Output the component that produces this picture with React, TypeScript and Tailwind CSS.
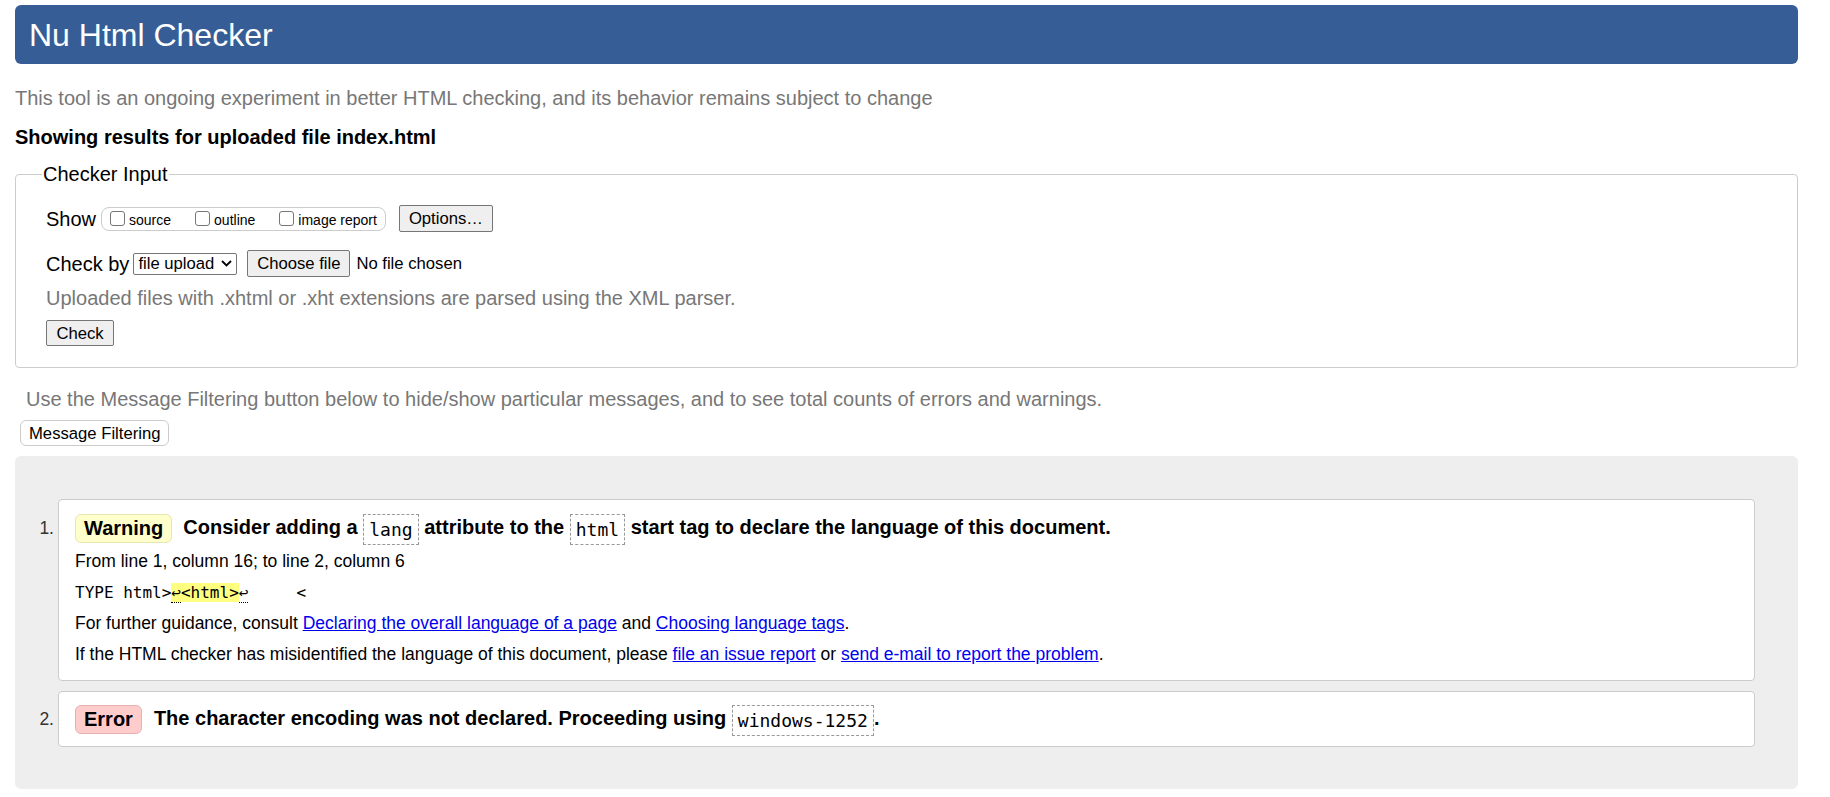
import React from "react";

function Checkbox() {
  return (
    <span className="inline-block h-[15px] w-[15px] shrink-0 rounded-[3px] border border-[#767676] bg-white" />
  );
}

function Code({ children }: { children: React.ReactNode }) {
  return (
    <code className="inline-block border border-dashed border-[#999] px-[5px] align-middle font-['DejaVu_Sans_Mono',monospace] text-[18px] font-normal leading-[29px]">
      {children}
    </code>
  );
}

function A({ children }: { children: React.ReactNode }) {
  return <a className="text-[#0000ee] underline">{children}</a>;
}

export default function App() {
  return (
    <div className="min-h-[797px] bg-white pl-[15px] pr-[32px] pt-[5px] font-['Liberation_Sans',Arial,sans-serif] text-black">
      <h1 className="flex h-[59px] items-center rounded-[6px] bg-[#365d95] pl-[14px] text-[32px] font-normal leading-none text-white">
        Nu Html Checker
      </h1>
      <p className="mt-[23px] text-[20px] leading-[23px] text-[#777]">
        This tool is an ongoing experiment in better HTML checking, and its behavior remains subject to change
      </p>
      <p className="mt-[16px] text-[20px] font-bold leading-[23px]">Showing results for uploaded file index.html</p>

      <fieldset className="mt-[14px] rounded-[4px] border border-[#ccc] pb-[21px] pl-[26px] pr-[26px] pt-[19px]">
        <legend className="px-[1px] text-[20px] leading-[23px]">Checker Input</legend>
        <div className="pl-[4px]">
          <div className="flex h-[27px] items-center">
            <span className="text-[20px]">Show</span>
            <div className="ml-[5px] flex h-[24px] items-center gap-[24px] rounded-[8px] border border-[#ccc] pl-[8px] pr-[8px] text-[14px]">
              <label className="flex items-center gap-[4px]">
                <Checkbox />
                <span className="mt-[3px]">source</span>
              </label>
              <label className="flex items-center gap-[4px]">
                <Checkbox />
                <span className="mt-[3px]">outline</span>
              </label>
              <label className="flex items-center gap-[4px]">
                <Checkbox />
                <span className="mt-[3px]">image report</span>
              </label>
            </div>
            <button className="ml-[13px] h-[27px] w-[94px] rounded-[2px] border border-[#767676] bg-[#efefef] text-[16.67px]">
              Options…
            </button>
          </div>

          <div className="mt-[18px] flex h-[27px] items-center">
            <span className="text-[20px]">Check by</span>
            <div className="ml-[4px] flex h-[22px] w-[104px] items-center justify-between rounded-[2px] border border-[#767676] bg-white pl-[4px] pr-[4px] text-[16.67px]">
              <span>file upload</span>
              <svg width="11" height="7" viewBox="0 0 11 7" fill="none">
                <path d="M1 1l4.5 4.5L10 1" stroke="#000" strokeWidth="1.8" />
              </svg>
            </div>
            <button className="ml-[10px] h-[27px] w-[103px] rounded-[2px] border border-[#767676] bg-[#efefef] text-[16.67px]">
              Choose file
            </button>
            <span className="ml-[6px] text-[16.67px]">No file chosen</span>
          </div>

          <p className="mt-[10px] text-[20px] leading-[23px] text-[#777]">
            Uploaded files with .xhtml or .xht extensions are parsed using the XML parser.
          </p>

          <button className="mt-[10px] h-[26px] w-[68px] rounded-[2px] border border-[#767676] bg-[#efefef] text-[16.67px]">
            Check
          </button>
        </div>
      </fieldset>

      <p className="mt-[20px] pl-[11px] text-[20px] leading-[23px] text-[#777]">
        Use the Message Filtering button below to hide/show particular messages, and to see total counts of errors and warnings.
      </p>
      <button className="ml-[5px] mt-[9px] h-[26px] rounded-[6px] border border-[#ccc] bg-white px-[8px] text-[16.67px]">
        Message Filtering
      </button>

      <div className="mt-[10px] rounded-[6px] bg-[#eee] pb-[42px] pr-[43px] pt-[43px]">
        <ol>
          <li className="flex items-start">
            <div className="mt-[13px] h-[32px] w-[43px] pr-[4px] text-right text-[17.5px] leading-[32px] text-[#333]">1.</div>
            <div className="flex-1 rounded-[4px] border border-[#ccc] bg-white pb-[10px] pl-[16px] pt-[12px]">
              <div className="flex h-[32px] items-center">
                <span className="rounded-[6px] border border-[#e6e6b0] bg-[#ffffcc] px-[8px] text-[20px] font-bold leading-[27px]">
                  Warning
                </span>
                <span className="ml-[11px] text-[20px] font-bold leading-[32px]">
                  Consider adding a <Code>lang</Code> attribute to the <Code>html</Code> start tag to declare the language of this document.
                </span>
              </div>
              <p className="mt-[2px] text-[17.5px] leading-[31px]">From line 1, column 16; to line 2, column 6</p>
              <p className="whitespace-pre font-['DejaVu_Sans_Mono',monospace] text-[16px] leading-[31px]">
                TYPE html&gt;
                <mark className="bg-[#ffff80] text-black">
                  <span className="border-b border-dotted border-black">↩</span>&lt;html&gt;
                </mark>
                <span className="border-b border-dotted border-black">↩</span>
                {"     <"}
              </p>
              <p className="text-[17.5px] leading-[31px]">
                For further guidance, consult <A>Declaring the overall language of a page</A> and <A>Choosing language tags</A>.
              </p>
              <p className="text-[17.5px] leading-[31px]">
                If the HTML checker has misidentified the language of this document, please <A>file an issue report</A> or{" "}
                <A>send e-mail to report the problem</A>.
              </p>
            </div>
          </li>
          <li className="mt-[10px] flex items-start">
            <div className="mt-[12px] h-[32px] w-[43px] pr-[4px] text-right text-[17.5px] leading-[32px] text-[#333]">2.</div>
            <div className="flex-1 rounded-[4px] border border-[#ccc] bg-white pb-[11px] pl-[16px] pt-[11px]">
              <div className="flex h-[32px] items-center">
                <span className="rounded-[6px] border border-[#e8b0b0] bg-[#ffcccc] px-[8px] text-[20px] font-bold leading-[27px]">
                  Error
                </span>
                <span className="ml-[12px] text-[20px] font-bold leading-[32px]">
                  The character encoding was not declared. Proceeding using <Code>windows-1252</Code>.
                </span>
              </div>
            </div>
          </li>
        </ol>
      </div>
    </div>
  );
}
